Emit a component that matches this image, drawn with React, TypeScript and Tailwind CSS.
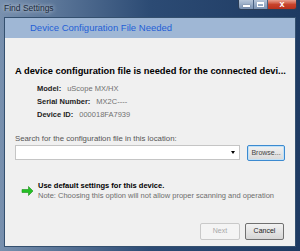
const font = { fontFamily: '"Liberation Sans", Arial, sans-serif' }

function WindowButtons() {
  return (
    <div className="flex h-[10px] self-start overflow-hidden rounded-b-[3px] border border-t-0 border-[#2c3e57]">
      <div className="flex w-[15px] items-center justify-center border-r border-[#4a6283] bg-gradient-to-b from-[#b7c6d9] to-[#7b93b3]">
        <div className="mt-[3px] h-[2px] w-[7px] bg-white shadow-[0_0_1px_#223]" />
      </div>
      <div className="flex w-[14px] items-center justify-center border-r border-[#4a6283] bg-gradient-to-b from-[#b7c6d9] to-[#7b93b3]">
        <div className="h-[5px] w-[7px] border border-t-2 border-white" />
      </div>
      <div className="flex w-[28px] items-center justify-center bg-gradient-to-b from-[#e8a08f] via-[#c7432b] to-[#b8301c]">
        <span className="text-[9px] font-bold leading-none text-white">x</span>
      </div>
    </div>
  )
}

export default function App() {
  return (
    <div
      className="flex h-[251px] w-[300px] flex-col overflow-hidden bg-gradient-to-r from-[#7890ae] via-[#2c4b74] to-[#1e3a62]"
      style={font}
    >
      <div className="flex h-[17px] items-start justify-between pl-[4px] pr-[3px]">
        <span className="mt-[2px] text-[8.5px] text-[#1c2a3c] [text-shadow:0_0_4px_rgba(255,255,255,0.9)]">
          Find Settings
        </span>
        <WindowButtons />
      </div>

      <div className="mx-[4px] flex flex-1 flex-col border border-[#34506f] bg-[#f0f0f0]">
        <div className="flex h-[20px] items-center bg-[#9fb7d5] pl-[25px]">
          <span className="text-[9.5px] text-[#1f5fd6]">
            Device Configuration File Needed
          </span>
        </div>

        <div className="flex flex-1 flex-col px-[10px]">
          <p className="mt-[27px] whitespace-nowrap text-[9.3px] font-bold text-black">
            A device configuration file is needed for the connected devi...
          </p>

          <div className="mt-[5px] flex flex-col gap-[3px] pl-[22px] text-[7.5px] leading-[10px]">
            <div className="flex gap-[6px]">
              <span className="font-bold text-[#222]">Model:</span>
              <span className="text-[#707070]">uScope MX/HX</span>
            </div>
            <div className="flex gap-[6px]">
              <span className="font-bold text-[#222]">Serial Number:</span>
              <span className="text-[#707070]">MX2C----</span>
            </div>
            <div className="flex gap-[6px]">
              <span className="font-bold text-[#222]">Device ID:</span>
              <span className="text-[#707070]">000018FA7939</span>
            </div>
          </div>

          <p className="mt-[14px] text-[7.8px] leading-[10px] text-[#555]">
            Search for the configuration file in this location:
          </p>

          <div className="mt-[1px] flex items-center">
            <div className="flex h-[15px] w-[225px] items-center justify-end border border-[#c5c5c5] bg-white pr-[4px]">
              <div className="h-0 w-0 border-x-[2.5px] border-t-[3px] border-x-transparent border-t-black" />
            </div>
            <button className="ml-[7px] h-[16px] w-[38px] rounded-[2px] border border-[#3c8ad0] bg-gradient-to-b from-[#f2f2f2] to-[#d9d9d9] text-[7px] text-[#444] shadow-[inset_0_0_0_1px_#bfe1f8]">
              Browse...
            </button>
          </div>

          <div className="mt-[20px] flex items-start gap-[4px] pl-[6px]">
            <svg width="13" height="12" viewBox="0 0 13 12" className="mt-[4px]">
              <path d="M1 4.5h6.5V1.5L12 6l-4.5 4.5V7.5H1z" fill="#25c025" stroke="#179217" strokeWidth="0.6" />
            </svg>
            <div className="flex flex-col whitespace-nowrap text-[7.5px] leading-[10px]">
              <span className="font-bold text-black">Use default settings for this device.</span>
              <span className="text-[#6d6d6d]">
                Note: Choosing this option will not allow proper scanning and operation
              </span>
            </div>
          </div>

          <div className="mt-auto mb-[6px] flex justify-end gap-[5px] pr-[1px]">
            <button className="h-[17px] w-[40px] rounded-[2px] border border-[#c9c9c9] bg-[#f4f4f4] text-[7px] text-[#a8a8a8]">
              Next
            </button>
            <button className="h-[17px] w-[39px] rounded-[2px] border border-[#707070] bg-gradient-to-b from-[#f2f2f2] to-[#d6d6d6] text-[7px] text-[#222]">
              Cancel
            </button>
          </div>
        </div>
      </div>
      <div className="h-[4px]" />
    </div>
  )
}
